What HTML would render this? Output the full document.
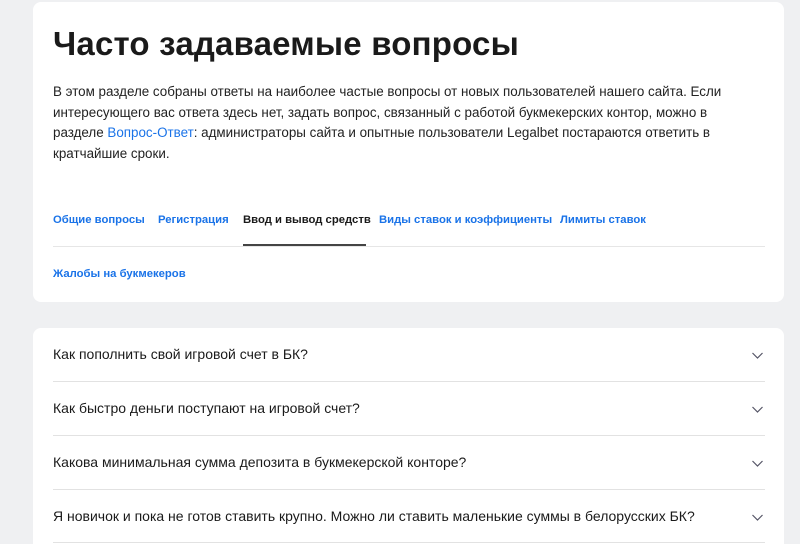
<!DOCTYPE html><html><head><meta charset="utf-8"><style>
html,body{margin:0;height:544px;overflow:hidden}
body{background:#eff0f2;font-family:"Liberation Sans",sans-serif;width:800px;position:relative}
.card{position:absolute;left:33px;width:751px;background:#fff;border-radius:8px}
h1{position:absolute;left:20px;top:23px;margin:0;font-size:33px;font-weight:bold;color:#1a1a1a;letter-spacing:0.2px}
p{position:absolute;left:20px;top:80px;margin:0;width:700px;font-size:13.4px;line-height:20.5px;color:#222}
a{color:#1a73e8;text-decoration:none}
.tab{position:absolute;top:212px;font-size:11.3px;font-weight:bold;color:#1a73e8;white-space:nowrap}
.q{position:absolute;left:20px;right:19px;height:53px;border-bottom:1px solid #e2e2e2;font-size:14px;color:#1a1a1a}
.q span{position:absolute;left:0;top:18px}
.q svg{position:absolute;right:2px;top:24px}
</style></head><body>
<div class="card" style="top:2px;height:300px">
<h1>Часто задаваемые вопросы</h1>
<p>В этом разделе собраны ответы на наиболее частые вопросы от новых пользователей нашего сайта. Если интересующего вас ответа здесь нет, задать вопрос, связанный с работой букмекерских контор, можно в разделе <a>Вопрос-Ответ</a>: администраторы сайта и опытные пользователи Legalbet постараются ответить в кратчайшие сроки.</p>
<div class="tab" style="left:20px">Общие вопросы</div>
<div class="tab" style="left:125px">Регистрация</div>
<div class="tab" style="left:210px;color:#1a1a1a">Ввод и вывод средств</div>
<div class="tab" style="left:346px">Виды ставок и коэффициенты</div>
<div class="tab" style="left:527px">Лимиты ставок</div>
<div style="position:absolute;left:20px;right:19px;top:244px;height:1px;background:#e6e6e6"></div>
<div style="position:absolute;left:210px;width:123px;top:242px;height:2px;background:#444"></div>
<div class="tab" style="left:20px;top:266px">Жалобы на букмекеров</div>
</div>
<div class="card" style="top:328px;height:216px;border-radius:8px 8px 0 0">
<div class="q" style="top:0"><span>Как пополнить свой игровой счет в БК?</span><svg width="11" height="7"><path d="M0.5 1l5 5 5-5" stroke="#556" stroke-width="1.2" fill="none"/></svg></div>
<div class="q" style="top:54px"><span>Как быстро деньги поступают на игровой счет?</span><svg width="11" height="7"><path d="M0.5 1l5 5 5-5" stroke="#556" stroke-width="1.2" fill="none"/></svg></div>
<div class="q" style="top:108px"><span>Какова минимальная сумма депозита в букмекерской конторе?</span><svg width="11" height="7"><path d="M0.5 1l5 5 5-5" stroke="#556" stroke-width="1.2" fill="none"/></svg></div>
<div class="q" style="top:162px;height:52px"><span>Я новичок и пока не готов ставить крупно. Можно ли ставить маленькие суммы в белорусских БК?</span><svg width="11" height="7"><path d="M0.5 1l5 5 5-5" stroke="#556" stroke-width="1.2" fill="none"/></svg></div>
</div>
</body></html>
